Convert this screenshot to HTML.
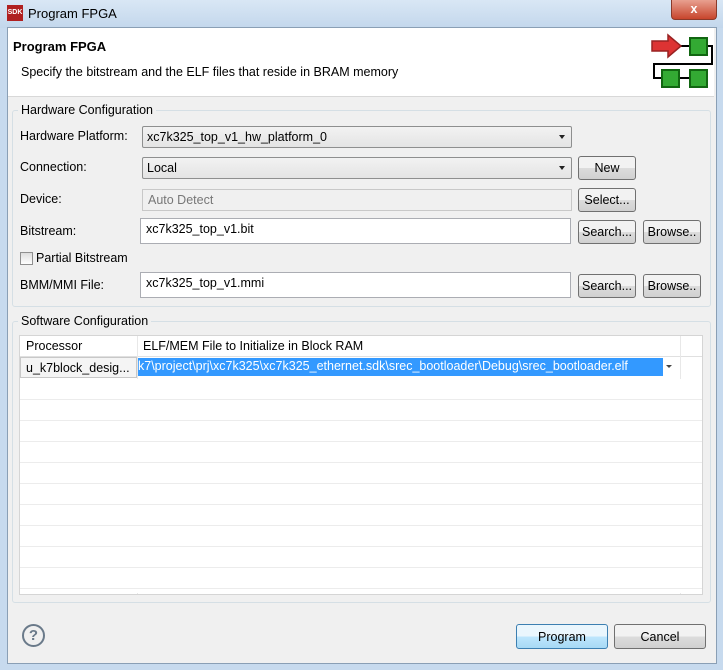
<!DOCTYPE html><html><head><style>
body{margin:0;width:723px;height:670px;overflow:hidden;background:#c7daee;font-family:"Liberation Sans",sans-serif;font-size:12.5px;color:#000;position:relative}
.a{position:absolute}
.title{left:0;top:0;width:723px;height:28px;background:linear-gradient(#d9e7f5,#c3d7ec)}
.client{left:7px;top:27px;width:708px;height:635px;background:#f0f0f0;border:1px solid #8a9fb5}
.hdr{left:8px;top:28px;width:706px;height:68px;background:#fff;border-bottom:1px solid #d8d8d8}
.grp{border:1px solid #d5dfe5;border-radius:3px}
.lbl{background:#f0f0f0;padding:0 3px}
.combo{border:1px solid #8e8f8f;border-radius:2px;background:linear-gradient(#f2f2f2,#e4e4e4);box-sizing:border-box;padding:3px 4px}
.combo:after{content:"";position:absolute;right:6px;top:8px;border:3.5px solid transparent;border-top:4px solid #222}
.txt{border:1px solid #abadb3;background:#fff;box-sizing:border-box;padding:3px 5px}
.btn{border:1px solid #707070;border-radius:3px;background:linear-gradient(#f2f2f2 50%,#dcdcdc 51%,#d0d0d0);box-sizing:border-box;text-align:center;padding-top:4px}
.tb{left:19px;top:335px;width:684px;height:260px;background:#fff;border:1px solid #d5d5d5;box-sizing:border-box}
</style></head><body>
<div class="a title"></div>
<div class="a" style="left:7px;top:5px;width:16px;height:16px;background:#b02020;color:#fff;font-size:7px;font-weight:bold;line-height:16px;text-align:center">SDK</div>
<div class="a" style="left:28px;top:6px;font-size:13px">Program FPGA</div>
<div class="a" style="left:671px;top:0;width:44px;height:19px;background:linear-gradient(#e8a090,#c7452c);border:1px solid #8a3a2a;border-top:0;border-radius:0 0 4px 4px;color:#fff;font-weight:bold;text-align:center;line-height:18px">x</div>
<div class="a client"></div>
<div class="a hdr"></div>
<div class="a" style="left:13px;top:39px;font-weight:bold;font-size:13px">Program FPGA</div>
<div class="a" style="left:21px;top:65px">Specify the bitstream and the ELF files that reside in BRAM memory</div>
<svg class="a" style="left:648px;top:33px" width="66" height="60"><path d="M59 13H64V31H6V45H14" stroke="#000" stroke-width="2" fill="none"/><path d="M31 45H42" stroke="#000" stroke-width="2"/><path d="M33 13H42" stroke="#000" stroke-width="2"/><path d="M4 8H20V2L33 13L20 24V18H4Z" fill="#d33" stroke="#922" stroke-width="1.5"/><rect x="42" y="5" width="17" height="17" fill="#3a3" stroke="#161" stroke-width="2"/><rect x="14" y="37" width="17" height="17" fill="#3a3" stroke="#161" stroke-width="2"/><rect x="42" y="37" width="17" height="17" fill="#3a3" stroke="#161" stroke-width="2"/></svg>
<div class="a grp" style="left:12px;top:110px;width:697px;height:195px"></div>
<div class="a lbl" style="left:18px;top:103px">Hardware Configuration</div>
<div class="a" style="left:20px;top:129px">Hardware Platform:</div>
<div class="a combo" style="left:142px;top:126px;width:430px;height:22px">xc7k325_top_v1_hw_platform_0</div>
<div class="a" style="left:20px;top:160px">Connection:</div>
<div class="a combo" style="left:142px;top:157px;width:430px;height:22px">Local</div>
<div class="a btn" style="left:578px;top:156px;width:58px;height:24px">New</div>
<div class="a" style="left:20px;top:192px">Device:</div>
<div class="a txt" style="left:142px;top:189px;width:430px;height:22px;background:#f0f0f0;color:#777;border-color:#c8c8c8">Auto Detect</div>
<div class="a btn" style="left:578px;top:188px;width:58px;height:24px">Select...</div>
<div class="a" style="left:20px;top:224px">Bitstream:</div>
<div class="a txt" style="left:140px;top:218px;width:431px;height:26px">xc7k325_top_v1.bit</div>
<div class="a btn" style="left:578px;top:220px;width:58px;height:24px">Search...</div>
<div class="a btn" style="left:643px;top:220px;width:58px;height:24px">Browse..</div>
<div class="a" style="left:20px;top:252px;width:11px;height:11px;border:1px solid #8f8f8f;background:linear-gradient(#ddd,#fff)"></div>
<div class="a" style="left:36px;top:251px">Partial Bitstream</div>
<div class="a" style="left:20px;top:278px">BMM/MMI File:</div>
<div class="a txt" style="left:140px;top:272px;width:431px;height:26px">xc7k325_top_v1.mmi</div>
<div class="a btn" style="left:578px;top:274px;width:58px;height:24px">Search...</div>
<div class="a btn" style="left:643px;top:274px;width:58px;height:24px">Browse..</div>
<div class="a grp" style="left:12px;top:321px;width:697px;height:280px"></div>
<div class="a lbl" style="left:18px;top:314px">Software Configuration</div>
<div class="a tb"></div>
<div class="a" style="left:20px;top:356px;width:682px;height:1px;background:#e0e0e0"></div>
<div class="a" style="left:137px;top:336px;width:1px;height:258px;background:#e8e8e8"></div>
<div class="a" style="left:680px;top:336px;width:1px;height:258px;background:#e8e8e8"></div>
<div class="a" style="left:20px;top:379px;width:682px;height:214px;background:repeating-linear-gradient(#fff 0 20px,#ececec 20px 21px)"></div>
<div class="a" style="left:26px;top:339px">Processor</div>
<div class="a" style="left:143px;top:339px">ELF/MEM File to Initialize in Block RAM</div>
<div class="a" style="left:20px;top:357px;width:117px;height:21px;border:1px solid #c8c8c8;box-sizing:border-box;padding:3px 5px;white-space:nowrap;overflow:hidden;background:#f4f4f4">u_k7block_desig...</div>
<div class="a" style="left:138px;top:358px;width:525px;height:18px;background:#3399ff;color:#fff;padding:1px 0 0 0;white-space:nowrap;overflow:hidden;box-sizing:border-box;direction:rtl;text-align:left">k7\project\prj\xc7k325\xc7k325_ethernet.sdk\srec_bootloader\Debug\srec_bootloader.elf</div>
<div class="a" style="left:666px;top:365px;border:3px solid transparent;border-top:3.5px solid #444"></div>
<div class="a" style="left:22px;top:624px;width:19px;height:19px;border:2px solid #6a7a8a;border-radius:50%;text-align:center;font-weight:bold;color:#6a7a8a;line-height:19px;font-size:15px">?</div>
<div class="a btn" style="left:516px;top:624px;width:92px;height:25px;border-color:#3c7fb1;background:linear-gradient(#eaf6fd 50%,#bee6fd 51%,#a7d9f5);padding-top:5px">Program</div>
<div class="a btn" style="left:614px;top:624px;width:92px;height:25px;padding-top:5px">Cancel</div>
</body></html>
